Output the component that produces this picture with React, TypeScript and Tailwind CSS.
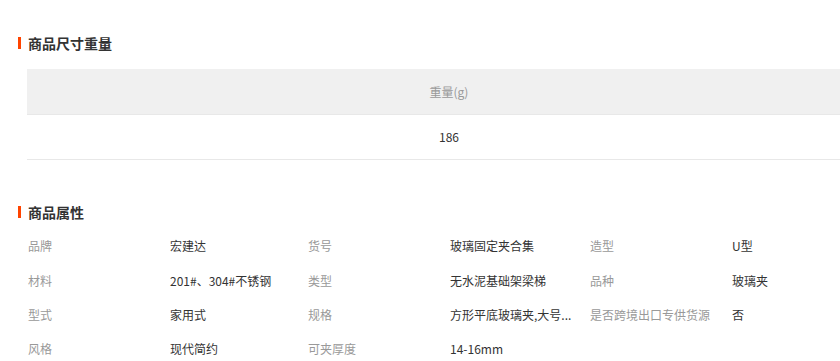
import React from "react";

const font = { fontFamily: '"Noto Sans CJK SC", "Noto Sans", sans-serif' };

function Title({ children }: { children: React.ReactNode }) {
  return (
    <div className="flex items-center h-5 pl-[18px]">
      <span className="w-[3px] h-[12px] bg-[#ff4400]" />
      <span className="ml-[7px] text-[14px] font-bold text-[#333] leading-5">{children}</span>
    </div>
  );
}

const rows: [string, string][][] = [
  [["品牌", "宏建达"], ["货号", "玻璃固定夹合集"], ["造型", "U型"]],
  [["材料", "201#、304#不锈钢"], ["类型", "无水泥基础架梁梯"], ["品种", "玻璃夹"]],
  [["型式", "家用式"], ["规格", "方形平底玻璃夹,大号..."], ["是否跨境出口专供货源", "否"]],
  [["风格", "现代简约"], ["可夹厚度", "14-16mm"]],
];

export default function App() {
  return (
    <div className="w-[840px] h-[361px] overflow-hidden bg-white" style={font}>
      <div className="pt-[33px]">
        <Title>商品尺寸重量</Title>
        <div className="mt-[16px] ml-[27px] w-[844px] text-[12px]">
          <div className="h-[46px] bg-[#f0f0f0] border-b border-[#e8e8e8] flex items-center justify-center text-[#999]">
            重量(g)
          </div>
          <div className="h-[45px] border-b border-[#e8e8e8] flex items-center justify-center text-[#333]">
            186
          </div>
        </div>
        <div className="mt-[42px]">
          <Title>商品属性</Title>
        </div>
        <div className="mt-[7px] ml-[28px] text-[12px]">
          {rows.map((r, i) => (
            <div key={i} className="grid grid-cols-[142px_138px_142px_140px_142px_1fr] h-[34.4px] items-center">
              {r.map(([k, v], j) => (
                <React.Fragment key={j}>
                  <div className="text-[#999] whitespace-nowrap">{k}</div>
                  <div className="text-[#333] whitespace-nowrap">{v}</div>
                </React.Fragment>
              ))}
            </div>
          ))}
        </div>
      </div>
    </div>
  );
}
